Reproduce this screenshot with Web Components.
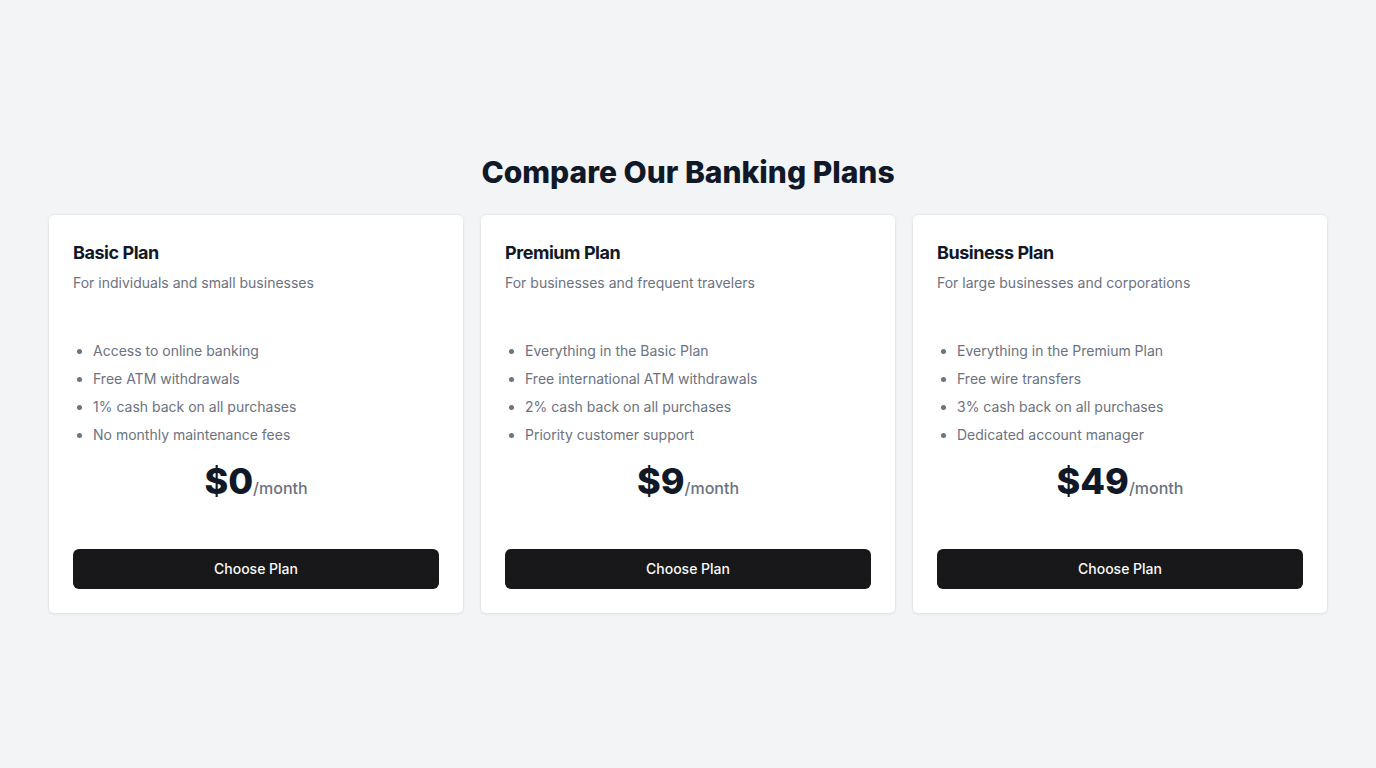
<!DOCTYPE html>
<html lang="en">
<head>
<meta charset="utf-8">
<meta name="viewport" content="width=device-width, initial-scale=1">
<title>Compare Our Banking Plans</title>
<style>
  body { margin: 0; font-family: Inter, sans-serif; background: #f3f4f6; color: #111827; }
</style>
</head>
<body>
<template id="plans-page">
  <style>
    :host { display: flex; flex-direction: column; justify-content: center; min-height: 100vh; box-sizing: border-box; padding: 48px; }
    h1 { margin: 0 0 24px; font-size: 30px; line-height: 36px; font-weight: 800; text-align: center; }
    .grid { display: grid; grid-template-columns: repeat(3, 1fr); gap: 16px; }
    @media (max-width: 900px) { .grid { grid-template-columns: 1fr; } }
  </style>
  <h1><slot name="title"></slot></h1>
  <div class="grid"><slot></slot></div>
</template>

<template id="plan-card">
  <style>
    :host { display: flex; flex-direction: column; box-sizing: border-box; padding: 24px; background: #fff; border: 1px solid #e5e7eb; border-radius: 6px; box-shadow: 0 1px 2px rgba(0, 0, 0, 0.05); }
    h2 { margin: 0; font-size: 18px; line-height: 28px; font-weight: 700; letter-spacing: -0.025em; }
    .summary { margin: 6px 0 48px; font-size: 14px; line-height: 20px; color: #6b7280; }
    ul { display: grid; gap: 8px; margin: 0; padding-left: 20px; font-size: 14px; line-height: 20px; color: #6b7280; }
    .price { margin: 16px 0 48px; text-align: center; font-size: 36px; line-height: 40px; font-weight: 800; }
    .price small { font-size: 16px; line-height: 24px; font-weight: 500; color: #6b7280; }
    button { height: 40px; border: 0; border-radius: 6px; background: #18181b; color: #fafafa; font: 500 14px/20px Inter, sans-serif; cursor: pointer; }
  </style>
  <h2><slot name="name"></slot></h2>
  <p class="summary"><slot name="summary"></slot></p>
  <ul><slot></slot></ul>
  <div class="price"><slot name="price"></slot><small>/month</small></div>
  <button type="button">Choose Plan</button>
</template>

<plans-page>
  <span slot="title">Compare Our Banking Plans</span>
  <plan-card>
    <span slot="name">Basic Plan</span>
    <span slot="summary">For individuals and small businesses</span>
    <li>Access to online banking</li>
    <li>Free ATM withdrawals</li>
    <li>1% cash back on all purchases</li>
    <li>No monthly maintenance fees</li>
    <span slot="price">$0</span>
  </plan-card>
  <plan-card>
    <span slot="name">Premium Plan</span>
    <span slot="summary">For businesses and frequent travelers</span>
    <li>Everything in the Basic Plan</li>
    <li>Free international ATM withdrawals</li>
    <li>2% cash back on all purchases</li>
    <li>Priority customer support</li>
    <span slot="price">$9</span>
  </plan-card>
  <plan-card>
    <span slot="name">Business Plan</span>
    <span slot="summary">For large businesses and corporations</span>
    <li>Everything in the Premium Plan</li>
    <li>Free wire transfers</li>
    <li>3% cash back on all purchases</li>
    <li>Dedicated account manager</li>
    <span slot="price">$49</span>
  </plan-card>
</plans-page>

<script>
  class TemplateElement extends HTMLElement {
    constructor() {
      super();
      const template = document.getElementById(this.localName);
      this.attachShadow({ mode: "open" }).append(template.content.cloneNode(true));
    }
  }
  customElements.define("plans-page", class extends TemplateElement {});
  customElements.define("plan-card", class extends TemplateElement {});
</script>
</body>
</html>
